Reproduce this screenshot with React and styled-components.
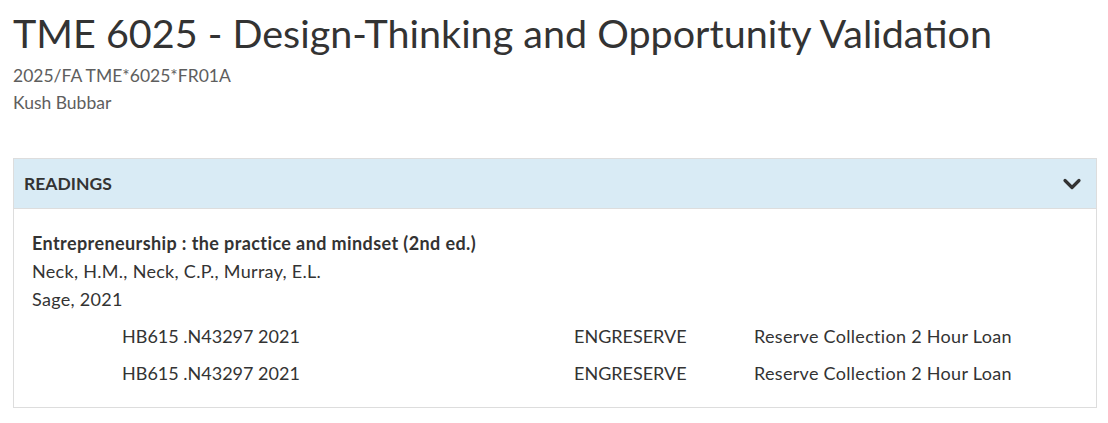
import React from "react";
import styled, { createGlobalStyle } from "styled-components";

const GlobalStyle = createGlobalStyle`
  body {
    margin: 0;
    background: #fff;
    font-family: Lato, "Liberation Sans", sans-serif;
    color: #333;
  }
`;

const Page = styled.div`
  padding: 11px 11px 0 13px;
`;

const Title = styled.h1`
  margin: 0;
  font-size: 39.5px;
  font-weight: 400;
  line-height: 44px;
  color: #333;
`;

const MetaBlock = styled.div`
  margin-top: 7px;
`;

const Meta = styled.div`
  font-size: 17.5px;
  line-height: 27px;
  color: #5e5e5e;
`;

const Panel = styled.section`
  margin-top: 42px;
  border: 1px solid #ddd;
`;

const PanelHeader = styled.div`
  display: flex;
  align-items: center;
  justify-content: space-between;
  height: 49px;
  padding: 0 14px 0 10px;
  background: #d9ebf5;
  border-bottom: 1px solid #ddd;
`;

const PanelTitle = styled.h2`
  margin: 0;
  font-size: 17.5px;
  font-weight: 700;
  color: #333;
`;

const Body = styled.div`
  padding: 20px 18px 15px;
`;

const Book = styled.div`
  font-size: 18px;
  line-height: 28px;
  letter-spacing: 0.3px;
  color: #333;
`;

const BookTitle = styled.div`
  font-weight: 700;
  letter-spacing: 0.4px;
`;

const Holdings = styled.div`
  margin-top: 5px;
`;

const Holding = styled.div`
  display: grid;
  grid-template-columns: 452px 180px 1fr;
  padding-left: 90px;
  font-size: 18px;
  line-height: 37px;
  color: #333;
`;

const Cell = styled.span`
  letter-spacing: ${(p) => (p.$wide ? "0.3px" : "0")};
`;

const Chevron = () => (
  <svg width="20" height="14" viewBox="0 0 20 14">
    <path d="M3 3.5 L10 10.5 L17 3.5" fill="none" stroke="#333" strokeWidth="3.2" strokeLinecap="round" strokeLinejoin="round" />
  </svg>
);

const holdings = [
  { call: "HB615 .N43297 2021", loc: "ENGRESERVE", type: "Reserve Collection 2 Hour Loan" },
  { call: "HB615 .N43297 2021", loc: "ENGRESERVE", type: "Reserve Collection 2 Hour Loan" },
];

export default function App() {
  return (
    <Page>
      <GlobalStyle />
      <Title>TME 6025 - Design-Thinking and Opportunity Validation</Title>
      <MetaBlock>
        <Meta>2025/FA TME*6025*FR01A</Meta>
        <Meta>Kush Bubbar</Meta>
      </MetaBlock>
      <Panel>
        <PanelHeader>
          <PanelTitle>READINGS</PanelTitle>
          <Chevron />
        </PanelHeader>
        <Body>
          <Book>
            <BookTitle>Entrepreneurship : the practice and mindset (2nd ed.)</BookTitle>
            <div>Neck, H.M., Neck, C.P., Murray, E.L.</div>
            <div>Sage, 2021</div>
          </Book>
          <Holdings>
            {holdings.map((h, i) => (
              <Holding key={i}>
                <Cell>{h.call}</Cell>
                <Cell>{h.loc}</Cell>
                <Cell $wide>{h.type}</Cell>
              </Holding>
            ))}
          </Holdings>
        </Body>
      </Panel>
    </Page>
  );
}
